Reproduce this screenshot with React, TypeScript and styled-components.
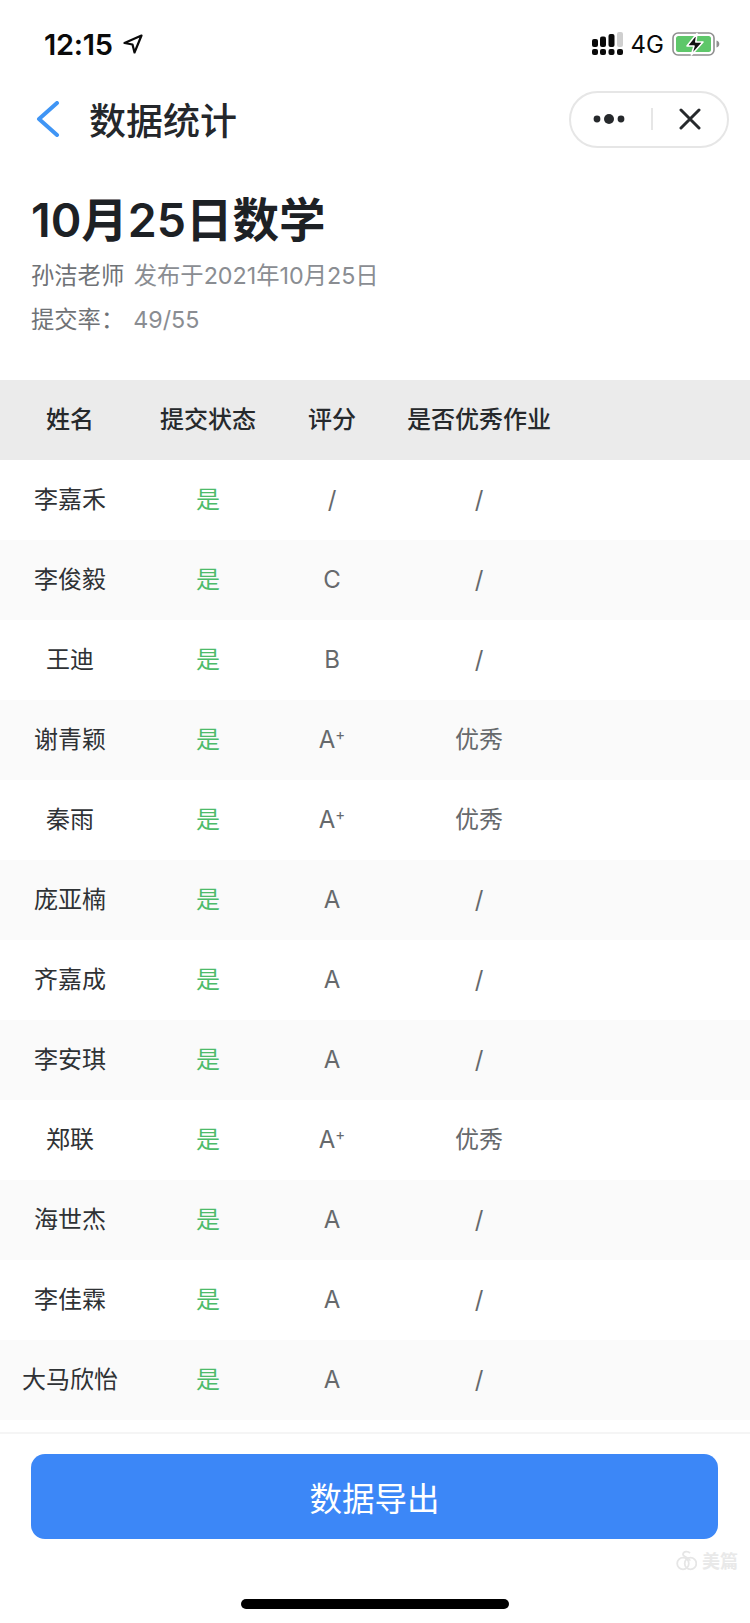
import styled, { createGlobalStyle } from "styled-components";

const GlobalStyle = createGlobalStyle`
  html, body {
    margin: 0;
    padding: 0;
    background: #fff;
  }
  * {
    box-sizing: border-box;
  }
`;

const FONT = `Inter, "Noto Sans CJK SC", sans-serif`;

const Page = styled.div`
  position: relative;
  width: 750px;
  height: 1623px;
  overflow: hidden;
  background: #fff;
  font-family: ${FONT};
`;

const StatusBar = styled.div`
  height: 88px;
  display: flex;
  align-items: center;
  justify-content: space-between;
  padding: 0 30px 0 44px;
`;

const StatusLeft = styled.div`
  display: flex;
  align-items: center;
  gap: 10px;
`;

const StatusRight = styled.div`
  display: flex;
  align-items: center;
  gap: 8px;
`;

const Time = styled.span`
  font-size: 29px;
  font-weight: 600;
  letter-spacing: -0.3px;
  color: #0a0a0a;
`;

const Network = styled.span`
  font-size: 24px;
  font-weight: 400;
  color: #0a0a0a;
`;

const NavBar = styled.div`
  height: 62px;
  display: flex;
  align-items: center;
  justify-content: space-between;
  padding: 0 21px 0 36px;
`;

const NavLeft = styled.div`
  display: flex;
  align-items: center;
  gap: 29px;
`;

const NavTitle = styled.h2`
  margin: 0;
  font-size: 37px;
  font-weight: 500;
  color: #24272b;
`;

const Capsule = styled.div`
  width: 160px;
  height: 57px;
  border: 2px solid #e6e6e6;
  border-radius: 29px;
  display: flex;
  align-items: center;
  justify-content: space-between;
  padding: 0 26px 0 22px;
`;

const CapsuleDivider = styled.div`
  width: 2px;
  height: 22px;
  background: #e6e6e6;
`;

const Intro = styled.section`
  height: 230px;
  padding: 41px 31px 0;
`;

const Title = styled.h1`
  margin: 0;
  font-size: 46.5px;
  line-height: 58px;
  font-weight: 600;
  color: #1d2125;
`;

const MetaLine = styled.div`
  margin-top: 10px;
  font-size: 23.3px;
  line-height: 34px;
  color: #8a8d92;
  white-space: pre;
`;

const MetaLabel = styled.span`
  margin-right: 3px;
  color: #6f7276;
`;

const Rate = styled.span`
  margin-left: 6px;
`;

const Table = styled.div`
  display: flex;
  flex-direction: column;
`;

const HeadRow = styled.div`
  height: 80px;
  display: grid;
  grid-template-columns: 140px 136px 112px 182px;
  align-items: center;
  background: #ebebeb;
`;

const Row = styled.div<{ $striped: boolean }>`
  height: 80px;
  display: grid;
  grid-template-columns: 140px 136px 112px 182px;
  align-items: center;
  background: ${(p) => (p.$striped ? "#fafafa" : "#fff")};
`;

const HeadCell = styled.div`
  padding-bottom: 5px;
  text-align: center;
  font-size: 24px;
  font-weight: 500;
  color: #26292c;
`;

const Cell = styled.div<{ $tone: "name" | "yes" | "value"; $latin?: boolean }>`
  padding-bottom: ${(p) => (p.$latin ? "1px" : "6px")};
  text-align: center;
  font-size: 24px;
  font-weight: 400;
  white-space: nowrap;
  color: ${(p) =>
    p.$tone === "name" ? "#2f3235" : p.$tone === "yes" ? "#4dbb6a" : "#66696c"};
`;

const Plus = styled.sup`
  font-size: 15px;
  line-height: 0;
  vertical-align: 8px;
`;

const Footer = styled.div`
  margin-top: 12px;
  border-top: 2px solid #f5f5f5;
  padding: 20px 32px 0 31px;
`;

const ExportButton = styled.button`
  display: block;
  width: 100%;
  height: 85px;
  border: none;
  border-radius: 14px;
  background: #3c87f7;
  color: #fff;
  font-family: ${FONT};
  font-size: 32.5px;
  font-weight: 400;
`;

const HomeBar = styled.div`
  width: 268px;
  height: 10px;
  margin: 60px auto 0;
  border-radius: 5px;
  background: #000;
`;

const Watermark = styled.div`
  position: absolute;
  left: 676px;
  top: 1547px;
  display: flex;
  align-items: center;
  gap: 5px;
`;

const WatermarkText = styled.span`
  font-size: 18px;
  font-weight: 700;
  color: #e9e9e9;
`;

const SignalIcon = () => (
  <svg width="31" height="24" viewBox="0 0 31 24">
    <g fill="#0a0a0a">
      <rect x="0" y="17" width="6" height="6" rx="2" />
      <rect x="8" y="17" width="6" height="6" rx="2" />
      <rect x="16.5" y="17" width="6" height="6" rx="2" />
      <rect x="25" y="17" width="6" height="6" rx="2" />
      <rect x="0" y="7" width="6" height="8" rx="2" />
      <rect x="8" y="4.5" width="6" height="10.5" rx="2" />
      <rect x="16.5" y="2" width="6" height="13" rx="2" />
    </g>
    <rect x="25" y="0" width="6" height="15" rx="2" fill="#cfcfcf" />
  </svg>
);

const BatteryIcon = () => (
  <svg width="48" height="24" viewBox="0 0 48 24">
    <rect x="1" y="1" width="41" height="22" rx="5" fill="none" stroke="#8f8f8f" strokeWidth="1.6" />
    <rect x="4" y="4" width="35" height="16" rx="2.5" fill="#5ec76a" />
    <path d="M44.5 8.5c1.8.5 2.8 1.8 2.8 3.5s-1 3-2.8 3.5z" fill="#8f8f8f" />
    <path
      d="M25 1.5 15 14h7l-2.6 9L31 10h-7.2z"
      fill="#111"
      stroke="#fff"
      strokeWidth="1.6"
      strokeLinejoin="round"
    />
  </svg>
);

const rows: [string, string, string][] = [
  ["李嘉禾", "/", "/"],
  ["李俊毅", "C", "/"],
  ["王迪", "B", "/"],
  ["谢青颖", "A+", "优秀"],
  ["秦雨", "A+", "优秀"],
  ["庞亚楠", "A", "/"],
  ["齐嘉成", "A", "/"],
  ["李安琪", "A", "/"],
  ["郑联", "A+", "优秀"],
  ["海世杰", "A", "/"],
  ["李佳霖", "A", "/"],
  ["大马欣怡", "A", "/"],
];

const App = () => {
  return (
    <Page>
      <GlobalStyle />
      <StatusBar>
        <StatusLeft>
          <Time>12:15</Time>
          <svg width="20" height="20" viewBox="0 0 20 20">
            <path
              d="M18.5 1.5 1.5 9l8 1.5L11.5 18.5z"
              fill="none"
              stroke="#0a0a0a"
              strokeWidth="2.2"
              strokeLinejoin="round"
            />
          </svg>
        </StatusLeft>
        <StatusRight>
          <SignalIcon />
          <Network>4G</Network>
          <BatteryIcon />
        </StatusRight>
      </StatusBar>

      <NavBar>
        <NavLeft>
          <svg width="24" height="36" viewBox="0 0 24 36">
            <path
              d="M21 2 3 18l18 16"
              fill="none"
              stroke="#3f95f5"
              strokeWidth="4"
              strokeLinecap="round"
              strokeLinejoin="round"
            />
          </svg>
          <NavTitle>数据统计</NavTitle>
        </NavLeft>
        <Capsule>
          <svg width="32" height="12" viewBox="0 0 32 12">
            <circle cx="4" cy="6" r="3.4" fill="#26292c" />
            <circle cx="16" cy="6" r="5" fill="#26292c" />
            <circle cx="28" cy="6" r="3.4" fill="#26292c" />
          </svg>
          <CapsuleDivider />
          <svg width="22" height="22" viewBox="0 0 22 22">
            <path
              d="M2 2l18 18M20 2 2 20"
              fill="none"
              stroke="#26292c"
              strokeWidth="3"
              strokeLinecap="round"
            />
          </svg>
        </Capsule>
      </NavBar>

      <Intro>
        <Title>10月25日数学</Title>
        <MetaLine>
          <MetaLabel>孙洁老师</MetaLabel> 发布于2021年10月25日
        </MetaLine>
        <MetaLine>
          <MetaLabel>提交率：</MetaLabel>
          <Rate>49/55</Rate>
        </MetaLine>
      </Intro>

      <Table>
        <HeadRow>
          <HeadCell>姓名</HeadCell>
          <HeadCell>提交状态</HeadCell>
          <HeadCell>评分</HeadCell>
          <HeadCell>是否优秀作业</HeadCell>
        </HeadRow>
        {rows.map(([name, score, excellent], i) => (
          <Row key={name} $striped={i % 2 === 1}>
            <Cell $tone="name">{name}</Cell>
            <Cell $tone="yes">是</Cell>
            <Cell $tone="value" $latin>
              {score === "A+" ? (
                <>
                  A<Plus>+</Plus>
                </>
              ) : (
                score
              )}
            </Cell>
            <Cell $tone="value" $latin={excellent === "/"}>
              {excellent}
            </Cell>
          </Row>
        ))}
      </Table>

      <Footer>
        <ExportButton>数据导出</ExportButton>
        <HomeBar />
      </Footer>

      <Watermark>
        <svg width="21" height="21" viewBox="0 0 21 21">
          <g fill="none" stroke="#e6e6e6" strokeWidth="1.8">
            <circle cx="7" cy="13.5" r="5.8" />
            <circle cx="14.5" cy="13.5" r="5.8" />
            <path d="M14 3.2C12 .8 7.5 1.2 7 4.2c-.5 3 7 3.2 6.8 6.6" />
          </g>
        </svg>
        <WatermarkText>美篇</WatermarkText>
      </Watermark>
    </Page>
  );
};

export default App;
